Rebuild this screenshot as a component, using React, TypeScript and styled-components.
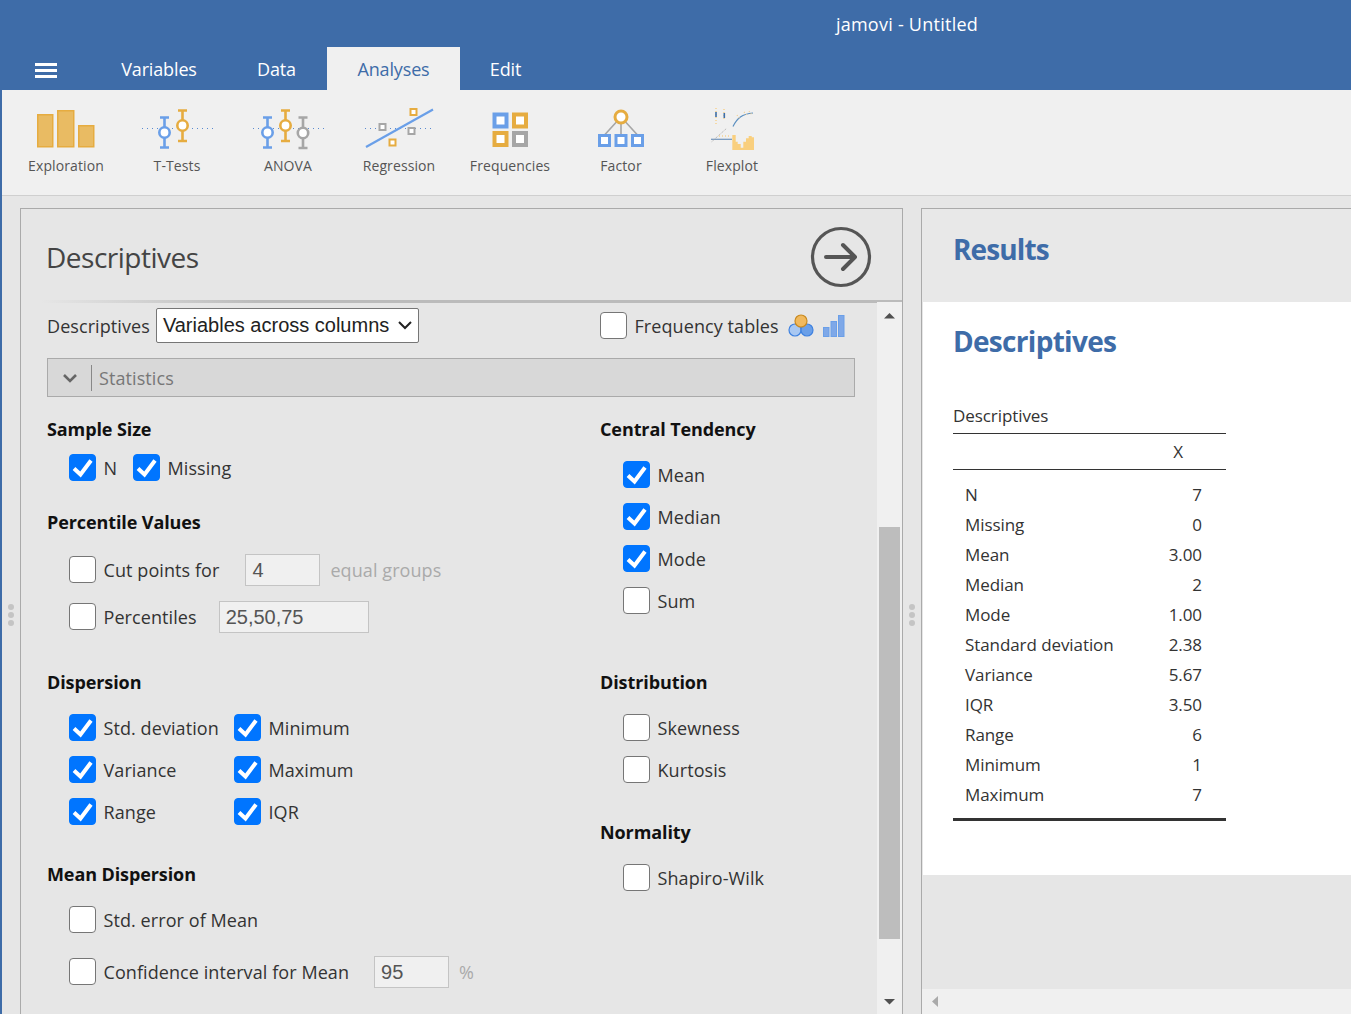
import styled, { createGlobalStyle } from "styled-components";

const GlobalStyle = createGlobalStyle`
  html, body {
    margin: 0;
    height: 100%;
    overflow: hidden;
  }
  body {
    font-family: "Open Sans", "Noto Sans", sans-serif;
    background: #3e6ca8;
  }
  #root { height: 100%; }
  * { box-sizing: border-box; }
`;

const Page = styled.div`
  height: 1014px;
  display: flex;
  flex-direction: column;
  overflow: hidden;
`;

const Header = styled.header`
  height: 90px;
  flex: none;
  background: #3e6ca8;
  color: #fff;
  display: flex;
  flex-direction: column;
`;

const TitleBar = styled.div`
  height: 47px;
  padding: 12px 0 0 463px;
  text-align: center;
  font-size: 18px;
  line-height: 24px;
  letter-spacing: 0.25px;
`;

const TabBar = styled.nav`
  height: 43px;
  display: flex;
  align-items: stretch;
`;

const Burger = styled.div`
  width: 92px;
  padding: 16px 0 0 35px;
  span {
    display: block;
    width: 22px;
    height: 3px;
    background: #fff;
    margin-bottom: 3px;
  }
`;

const Tab = styled.div<{ $active?: boolean; $width: number }>`
  width: ${(p) => p.$width}px;
  display: flex;
  align-items: center;
  justify-content: center;
  font-size: 18px;
  letter-spacing: -0.15px;
  background: ${(p) => (p.$active ? "#f0f0f0" : "transparent")};
  color: ${(p) => (p.$active ? "#3e6ca8" : "#fff")};
`;

const Toolbar = styled.div`
  height: 106px;
  flex: none;
  margin-left: 2px;
  padding-left: 8.5px;
  background: #f0f0f0;
  border-bottom: 1px solid #cfcfcf;
  display: flex;
`;

const Tool = styled.div`
  width: 111px;
  display: flex;
  flex-direction: column;
  align-items: center;
  padding-top: 16px;
  svg { display: block; }
`;

const ToolLabel = styled.div`
  margin-top: 6px;
  font-size: 14px;
  line-height: 20px;
  color: #555;
  letter-spacing: 0.1px;
`;

const Workspace = styled.main`
  flex: 1;
  min-height: 0;
  margin-left: 2px;
  display: flex;
  align-items: stretch;
  background: #e6e6e6;
`;

const Splitter = styled.div<{ $width: number }>`
  width: ${(p) => p.$width}px;
  flex: none;
  display: flex;
  flex-direction: column;
  align-items: center;
  gap: 2px;
  padding-top: 408px;
  i {
    display: block;
    width: 6px;
    height: 6px;
    border-radius: 50%;
    background: #c4c4c4;
  }
`;

const OptionsPanel = styled.section`
  width: 883px;
  flex: none;
  margin-top: 12px;
  border: 1px solid #aaa;
  border-bottom: 0;
  display: flex;
  flex-direction: column;
  min-height: 0;
`;

const OptionsHead = styled.div`
  height: 93px;
  flex: none;
  padding: 3px 30px 0 26px;
  display: flex;
  align-items: center;
  justify-content: space-between;
  position: relative;
  &::after {
    content: "";
    position: absolute;
    left: 20px;
    right: 0;
    bottom: -1px;
    height: 3px;
    background: linear-gradient(to right, #e6e6e6, #bbb 25%);
  }
`;

const OptionsTitle = styled.h1`
  margin: 0 0 0 -1px;
  font-size: 28px;
  font-weight: 400;
  color: #444;
  letter-spacing: -0.5px;
`;

const OptionsBody = styled.div`
  flex: 1;
  min-height: 0;
  display: flex;
`;

const Form = styled.div`
  flex: 1;
  padding: 6px 22px 0 26px;
  color: #333;
  font-size: 18px;
  letter-spacing: 0.08px;
`;

const TopRow = styled.div`
  height: 35px;
  display: flex;
  align-items: center;
  justify-content: space-between;
`;

const TopLeft = styled.div`
  display: flex;
  align-items: center;
  gap: 6px;
`;

const TopRight = styled.div`
  width: 255px;
  display: flex;
  align-items: center;
  gap: 9px;
`;

const Select = styled.div`
  width: 263px;
  height: 35px;
  background: #fff;
  border: 1px solid #767676;
  border-radius: 2px;
  padding: 0 6px;
  display: flex;
  align-items: center;
  justify-content: space-between;
  font-family: "Liberation Sans", Arial, sans-serif;
  font-size: 20px;
  letter-spacing: 0;
  color: #222;
`;

const GroupBar = styled.div`
  height: 39px;
  margin-top: 15px;
  background: #d8d8d8;
  border: 1px solid #aaa;
  display: flex;
  align-items: center;
  color: #777;
`;

const GroupChevron = styled.div`
  width: 44px;
  height: 26px;
  margin-right: 7px;
  border-right: 1px solid #888;
  display: flex;
  align-items: center;
  justify-content: center;
`;

const Columns = styled.div`
  display: grid;
  grid-template-columns: 553px 1fr;
`;

const Column = styled.div``;

const Heading = styled.h2<{ $top: number }>`
  margin: ${(p) => p.$top}px 0 0;
  height: 24px;
  line-height: 24px;
  font-size: 18px;
  font-weight: 700;
  color: #111;
  letter-spacing: -0.1px;
`;

const Row = styled.div<{ $top: number; $indent?: number }>`
  margin: ${(p) => p.$top}px 0 0 ${(p) => p.$indent ?? 22}px;
  height: 32px;
  display: flex;
  align-items: center;
`;

const Check = styled.label<{ $width?: number }>`
  display: flex;
  align-items: center;
  gap: 7.5px;
  ${(p) => (p.$width ? `width: ${p.$width}px;` : "")}
`;

const Box = styled.span<{ $checked?: boolean }>`
  width: 27px;
  height: 27px;
  margin-top: -1px;
  flex: none;
  border-radius: 4px;
  display: flex;
  align-items: center;
  justify-content: center;
  background: ${(p) => (p.$checked ? "#0075ff" : "#fff")};
  border: 1px solid ${(p) => (p.$checked ? "#0075ff" : "#767676")};
`;

const Field = styled.div<{ $width: number; $left: number }>`
  width: ${(p) => p.$width}px;
  height: 32px;
  margin-left: ${(p) => p.$left}px;
  padding-left: 6px;
  flex: none;
  display: flex;
  align-items: center;
  background: #f0f0f0;
  border: 1px solid #c4c4c4;
  font-family: "Liberation Sans", Arial, sans-serif;
  font-size: 20px;
  letter-spacing: 0;
  color: #555;
`;

const Muted = styled.span`
  margin-left: 10px;
  color: #aaa;
`;

const Scrollbar = styled.div`
  width: 25px;
  flex: none;
  background: #f0f0f0;
  display: flex;
  flex-direction: column;
  align-items: center;
  padding-top: 11px;
  position: relative;
  svg { display: block; }
`;

const ScrollThumb = styled.div`
  position: absolute;
  top: 225px;
  left: 2px;
  width: 21px;
  height: 412px;
  background: #bdbdbd;
`;

const ScrollDown = styled.div`
  position: absolute;
  bottom: 9px;
  left: 7px;
`;

const ResultsPanel = styled.section`
  flex: 1;
  min-width: 0;
  margin-top: 12px;
  border: 1px solid #aaa;
  border-width: 1px 0 0 1px;
  display: flex;
  flex-direction: column;
`;

const ResultsHead = styled.div`
  height: 93px;
  flex: none;
  padding: 20px 0 0 31px;
  font-size: 28px;
  line-height: 40px;
  font-weight: 700;
  color: #3e6ca8;
  letter-spacing: -0.9px;
  background: #e8e8e8;
`;

const ResultsSheet = styled.div`
  height: 573px;
  flex: none;
  margin-left: 1px;
  padding: 19px 0 0 30px;
  background: #fff;
`;

const SheetTitle = styled.h2`
  margin: 0;
  font-size: 28px;
  line-height: 40px;
  font-weight: 700;
  color: #3e6ca8;
  letter-spacing: -0.7px;
`;

const ResultTable = styled.table`
  margin-top: 43px;
  width: 273px;
  border-collapse: collapse;
  font-size: 17px;
  color: #333;
  letter-spacing: -0.08px;
  caption {
    text-align: left;
    height: 29px;
    line-height: 24px;
    font-size: 17px;
  }
  th {
    font-weight: 400;
    height: 36px;
    border-top: 1px solid #333;
    border-bottom: 1px solid #333;
    text-align: right;
    padding: 0 43px 0 0;
  }
  td {
    height: 30px;
    padding: 0;
  }
  td:first-child { padding-left: 12px; }
  td:last-child { text-align: right; padding-right: 24px; }
  tbody tr:first-child td { height: 40px; padding-top: 10px; }
  tfoot td { height: 10px; border-bottom: 3px solid #333; }
`;

const BottomBar = styled.div`
  flex: 1;
  display: flex;
  flex-direction: column;
  justify-content: flex-end;
`;

const HScroll = styled.div`
  height: 25px;
  background: #f0f0f0;
  display: flex;
  align-items: center;
  padding-left: 9px;
`;

const tools = [
  { label: "Exploration", icon: <ExplorationIcon /> },
  { label: "T-Tests", icon: <TTestsIcon /> },
  { label: "ANOVA", icon: <AnovaIcon /> },
  { label: "Regression", icon: <RegressionIcon /> },
  { label: "Frequencies", icon: <FrequenciesIcon /> },
  { label: "Factor", icon: <FactorIcon /> },
  { label: "Flexplot", icon: <FlexplotIcon /> },
];

const results = [
  ["N", "7"],
  ["Missing", "0"],
  ["Mean", "3.00"],
  ["Median", "2"],
  ["Mode", "1.00"],
  ["Standard deviation", "2.38"],
  ["Variance", "5.67"],
  ["IQR", "3.50"],
  ["Range", "6"],
  ["Minimum", "1"],
  ["Maximum", "7"],
];

const BLUE = "#6a9fe8";
const ORANGE = "#e6ac40";
const GREY = "#a6a6a6";

function ExplorationIcon() {
  return (
    <svg width="80" height="44" viewBox="25 106 80 44">
      <g fill="#e9bb63" stroke={ORANGE} strokeWidth="1.5">
        <rect x="36.75" y="114.75" width="15" height="32" />
        <rect x="56.75" y="110.75" width="16" height="36" />
        <rect x="77.75" y="125.75" width="15" height="21" />
      </g>
    </svg>
  );
}

function ErrorBar({ x, top, cy, bottom, color }: { x: number; top: number; cy: number; bottom: number; color: string }) {
  return (
    <g stroke={color} fill="none" strokeWidth="2.6">
      <path d={`M${x - 4.5} ${top}H${x + 4.5}M${x - 4.5} ${bottom}H${x + 4.5}M${x} ${top}V${bottom}`} />
      <circle cx={x} cy={cy} r="5.2" fill="#fff" />
    </g>
  );
}

function DottedLine({ from, to }: { from: number; to: number }) {
  return <path d={`M${from} 128.5H${to}`} stroke="#5a8ad0" strokeWidth="1" strokeDasharray="1 4" fill="none" />;
}

function TTestsIcon() {
  return (
    <svg width="80" height="44" viewBox="137 106 80 44">
      <DottedLine from={142} to={213} />
      <ErrorBar x={164.5} top={117.5} cy={132.5} bottom={147.5} color={BLUE} />
      <ErrorBar x={182.5} top={110.5} cy={125.5} bottom={141} color={ORANGE} />
    </svg>
  );
}

function AnovaIcon() {
  return (
    <svg width="80" height="44" viewBox="248 106 80 44">
      <DottedLine from={253} to={324} />
      <ErrorBar x={267.5} top={117.5} cy={132.5} bottom={147.5} color={BLUE} />
      <ErrorBar x={285.5} top={110.5} cy={125.5} bottom={141} color={ORANGE} />
      <ErrorBar x={303} top={117.5} cy={133} bottom={148} color={GREY} />
    </svg>
  );
}

function RegressionIcon() {
  const square = (x: number, y: number, color: string) => (
    <rect x={x - 3} y={y - 3} width="6" height="6" fill="#fff" stroke={color} strokeWidth="2" />
  );
  return (
    <svg width="80" height="44" viewBox="359 106 80 44">
      <DottedLine from={365} to={434} />
      <path d="M366 147L433 109.5" stroke={BLUE} strokeWidth="2.2" fill="none" />
      {square(382.5, 127, GREY)}
      {square(411.5, 131, GREY)}
      {square(413.5, 112, ORANGE)}
      {square(392.5, 142.5, ORANGE)}
    </svg>
  );
}

function FrequenciesIcon() {
  const cell = (x: number, y: number, color: string) => (
    <rect x={x + 2.5} y={y + 2.5} width="12" height="12" fill="#fff" stroke={color} strokeWidth="4" />
  );
  return (
    <svg width="80" height="44" viewBox="470 106 80 44">
      {cell(492, 112, BLUE)}
      {cell(511.5, 112, ORANGE)}
      {cell(492, 130.5, ORANGE)}
      {cell(511.5, 130.5, GREY)}
    </svg>
  );
}

function FactorIcon() {
  const cell = (x: number) => (
    <rect x={x + 1.5} y="135.5" width="10" height="10" fill="#fff" stroke={BLUE} strokeWidth="3" />
  );
  return (
    <svg width="80" height="44" viewBox="581 106 80 44">
      <path d="M621 117L604.5 135M621 117V135M621 117L637.5 135" stroke={GREY} strokeWidth="1.6" fill="none" />
      <circle cx="621" cy="117" r="6" fill="#fff" stroke={ORANGE} strokeWidth="3" />
      {cell(598)}
      {cell(614.5)}
      {cell(631)}
    </svg>
  );
}

function FlexplotIcon() {
  return (
    <svg width="80" height="44" viewBox="692 106 80 44">
      <path
        d="M732.3 150V135H735.7V141.7H737.7V144H740.7V147.7H743.3V141.7H746V138.3H748.7V136H751.7V137.3H754V150Z"
        fill="#f9cf7e"
      />
      <path d="M733 126.5C737 118 742 114 753 113" stroke="#5b8fc0" strokeWidth="1.2" fill="none" />
      <path d="M737 115L740 119M744 112L748 116M749 111L752 115" stroke="#f3cf8e" strokeWidth="1.2" strokeDasharray="1 2" fill="none" />
      <path d="M711 139.3H732" stroke="#6f93bd" strokeWidth="1.2" fill="none" />
      <path d="M711.7 141.7L726.7 128.3" stroke="#a9a9a9" strokeWidth="1" strokeDasharray="1 1" fill="none" />
      <path d="M719 136H730" stroke="#f3d9aa" strokeWidth="2" strokeDasharray="1 2" fill="none" />
      <path d="M716 108V125M724 109V119" stroke="#f5d9a6" strokeWidth="2" strokeDasharray="1 2" fill="none" />
      <path d="M716 112V117M724.3 113V118" stroke="#3f6fa8" strokeWidth="1.6" fill="none" />
    </svg>
  );
}

function Tick() {
  return (
    <svg width="21" height="21" viewBox="0 0 21 21">
      <path d="M2 11.5L8.5 17.5L19 3.5" stroke="#fff" strokeWidth="4" fill="none" />
    </svg>
  );
}

function Option({ label, checked, width }: { label: string; checked?: boolean; width?: number }) {
  return (
    <Check $width={width}>
      <Box $checked={checked}>{checked ? <Tick /> : null}</Box>
      {label}
    </Check>
  );
}

function RunArrow() {
  return (
    <svg width="62" height="62" viewBox="0 0 62 62">
      <circle cx="31" cy="31" r="28.5" fill="none" stroke="#555" strokeWidth="3.2" />
      <path d="M16 31H44M33 19L45 31L33 43" fill="none" stroke="#555" strokeWidth="4" strokeLinecap="round" strokeLinejoin="round" />
    </svg>
  );
}

function VennIcon() {
  return (
    <svg width="26" height="24" viewBox="0 0 26 24">
      <circle cx="7" cy="16" r="6" fill="#a9c8f2" stroke="#3f82e0" strokeWidth="1.2" />
      <circle cx="19" cy="16" r="6" fill="#6a9fe8" stroke="#3f82e0" strokeWidth="1.2" />
      <circle cx="13" cy="7" r="6" fill="#f0b95e" stroke="#c98a20" strokeWidth="1.2" />
    </svg>
  );
}

function BarsIcon() {
  return (
    <svg width="22" height="22" viewBox="0 0 22 22">
      <g fill="#7ea8e8" stroke="#6a9fe8">
        <rect x="0.5" y="12.5" width="5.5" height="9" />
        <rect x="8" y="6.5" width="5.5" height="15" />
        <rect x="15.5" y="0.5" width="5.5" height="21" />
      </g>
    </svg>
  );
}

function Triangle({ dir }: { dir: "up" | "down" | "left" }) {
  const d = { up: "M0 5.5L5.5 0L11 5.5Z", down: "M0 0H11L5.5 5.5Z", left: "M7 0V11L1 5.5Z" }[dir];
  const fill = dir === "left" ? "#aaa" : "#505050";
  return (
    <svg width={dir === "left" ? 8 : 11} height={dir === "left" ? 11 : 6} viewBox={dir === "left" ? "0 0 8 11" : "0 0 11 6"}>
      <path d={d} fill={fill} />
    </svg>
  );
}

function Dots({ width }: { width: number }) {
  return (
    <Splitter $width={width}>
      <i />
      <i />
      <i />
    </Splitter>
  );
}

export default function App() {
  return (
    <Page>
      <GlobalStyle />
      <Header>
        <TitleBar>jamovi - Untitled</TitleBar>
        <TabBar>
          <Burger>
            <span />
            <span />
            <span />
          </Burger>
          <Tab $width={134}>Variables</Tab>
          <Tab $width={101}>Data</Tab>
          <Tab $width={133} $active>
            Analyses
          </Tab>
          <Tab $width={91}>Edit</Tab>
        </TabBar>
      </Header>

      <Toolbar>
        {tools.map((tool) => (
          <Tool key={tool.label}>
            {tool.icon}
            <ToolLabel>{tool.label}</ToolLabel>
          </Tool>
        ))}
      </Toolbar>

      <Workspace>
        <Dots width={18} />
        <OptionsPanel>
          <OptionsHead>
            <OptionsTitle>Descriptives</OptionsTitle>
            <RunArrow />
          </OptionsHead>
          <OptionsBody>
            <Form>
              <TopRow>
                <TopLeft>
                  Descriptives
                  <Select>
                    Variables across columns
                    <svg width="14" height="9" viewBox="0 0 14 9">
                      <path d="M1 1L7 7L13 1" fill="none" stroke="#222" strokeWidth="2" />
                    </svg>
                  </Select>
                </TopLeft>
                <TopRight>
                  <Option label="Frequency tables" />
                  <VennIcon />
                  <BarsIcon />
                </TopRight>
              </TopRow>
              <GroupBar>
                <GroupChevron>
                  <svg width="16" height="10" viewBox="0 0 16 10">
                    <path d="M2 2L8 8L14 2" fill="none" stroke="#666" strokeWidth="2.6" />
                  </svg>
                </GroupChevron>
                Statistics
              </GroupBar>
              <Columns>
                <Column>
                  <Heading $top={20}>Sample Size</Heading>
                  <Row $top={11}>
                    <Option label="N" checked width={64} />
                    <Option label="Missing" checked />
                  </Row>
                  <Heading $top={26}>Percentile Values</Heading>
                  <Row $top={20}>
                    <Option label="Cut points for" />
                    <Field $width={75} $left={26}>
                      4
                    </Field>
                    <Muted>equal groups</Muted>
                  </Row>
                  <Row $top={15}>
                    <Option label="Percentiles" />
                    <Field $width={150} $left={22}>
                      25,50,75
                    </Field>
                  </Row>
                  <Heading $top={37}>Dispersion</Heading>
                  <Row $top={18}>
                    <Option label="Std. deviation" checked width={165} />
                    <Option label="Minimum" checked />
                  </Row>
                  <Row $top={10}>
                    <Option label="Variance" checked width={165} />
                    <Option label="Maximum" checked />
                  </Row>
                  <Row $top={10}>
                    <Option label="Range" checked width={165} />
                    <Option label="IQR" checked />
                  </Row>
                  <Heading $top={34}>Mean Dispersion</Heading>
                  <Row $top={18}>
                    <Option label="Std. error of Mean" />
                  </Row>
                  <Row $top={20}>
                    <Option label="Confidence interval for Mean" />
                    <Field $width={75} $left={25}>
                      95
                    </Field>
                    <Muted>%</Muted>
                  </Row>
                </Column>
                <Column>
                  <Heading $top={20}>Central Tendency</Heading>
                  <Row $top={18} $indent={23}>
                    <Option label="Mean" checked />
                  </Row>
                  <Row $top={10} $indent={23}>
                    <Option label="Median" checked />
                  </Row>
                  <Row $top={10} $indent={23}>
                    <Option label="Mode" checked />
                  </Row>
                  <Row $top={10} $indent={23}>
                    <Option label="Sum" />
                  </Row>
                  <Heading $top={53}>Distribution</Heading>
                  <Row $top={18} $indent={23}>
                    <Option label="Skewness" />
                  </Row>
                  <Row $top={10} $indent={23}>
                    <Option label="Kurtosis" />
                  </Row>
                  <Heading $top={34}>Normality</Heading>
                  <Row $top={18} $indent={23}>
                    <Option label="Shapiro-Wilk" />
                  </Row>
                </Column>
              </Columns>
            </Form>
            <Scrollbar>
              <Triangle dir="up" />
              <ScrollThumb />
              <ScrollDown>
                <Triangle dir="down" />
              </ScrollDown>
            </Scrollbar>
          </OptionsBody>
        </OptionsPanel>
        <Dots width={18} />
        <ResultsPanel>
          <ResultsHead>Results</ResultsHead>
          <ResultsSheet>
            <SheetTitle>Descriptives</SheetTitle>
            <ResultTable>
              <caption>Descriptives</caption>
              <thead>
                <tr>
                  <th />
                  <th>X</th>
                </tr>
              </thead>
              <tbody>
                {results.map(([name, value]) => (
                  <tr key={name}>
                    <td>{name}</td>
                    <td>{value}</td>
                  </tr>
                ))}
              </tbody>
              <tfoot>
                <tr>
                  <td colSpan={2} />
                </tr>
              </tfoot>
            </ResultTable>
          </ResultsSheet>
          <BottomBar>
            <HScroll>
              <Triangle dir="left" />
            </HScroll>
          </BottomBar>
        </ResultsPanel>
      </Workspace>
    </Page>
  );
}
